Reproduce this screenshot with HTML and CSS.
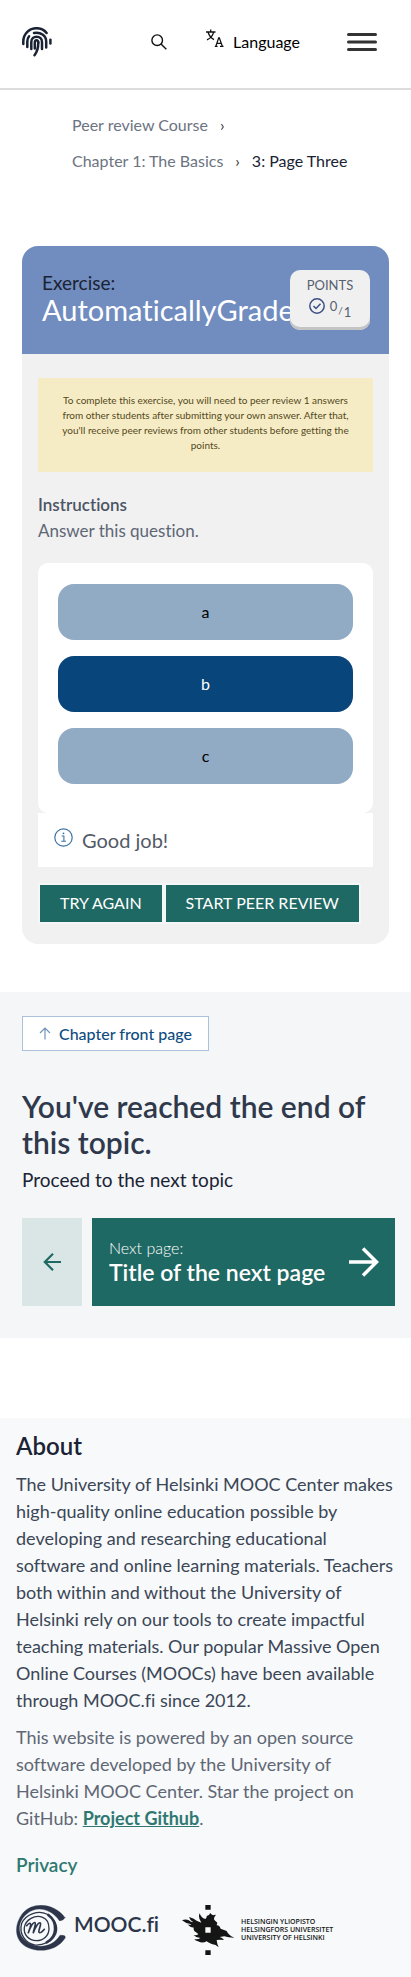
FILE: index.html
```html
<!DOCTYPE html>
<html lang="en">
<head>
<meta charset="utf-8">
<meta name="viewport" content="width=device-width, initial-scale=1">
<title>3: Page Three</title>
<link rel="stylesheet" href="styles.css">
</head>
<body>
<header class="topbar">
  <a class="brand" href="#" aria-label="Home">
    <svg width="30" height="30" viewBox="0 0 30 30" fill="none" stroke="#1a2333" stroke-width="2.5" stroke-linecap="round">
      <path d="M1.300 17V14.500C1.300 7 7 1.200 14.500 1.200C18.800 1.200 22.300 3 24.600 6"/>
      <path d="M28.400 12.800V16.500"/>
      <path d="M5.300 20V14.500C5.300 12.500 6 10.500 7.100 9.200"/>
      <path d="M12 6C18.500 4.600 24.200 8.500 24.200 14.500V20.500"/>
      <path d="M9.300 22V15C9.300 8 20 8 20 15V22"/>
      <path d="M16.300 15.500C16.300 12.500 12.800 12.800 12.800 15.500V21.500"/>
      <path d="M16.300 15.500C16.300 20 15.500 24.500 12.500 28.200"/>
    </svg>
  </a>
  <nav class="tools" aria-label="Tools">
    <button class="icon-button" aria-label="Search">
      <svg width="16" height="16" viewBox="0 0 16 16" fill="none" stroke="#111" stroke-width="1.400"><circle cx="6.200" cy="6.200" r="5.300"/><path d="M10 10L15.300 15.300"/></svg>
    </button>
    <button class="language">
      <svg width="18" height="19" viewBox="0 0 18 19" fill="none" stroke="#111" stroke-width="1.300"><path d="M0 3H9.500M4.700 0.500V3M7.600 3C7 6.500 4.500 9.200 1 10.800M2 3C3 6.500 5 9 8 10.600M8.800 17.400H11.600M14 17.400H17.500M9.800 17.400L12.700 8.800H13.300L16.400 17.400M10.800 14.400H15.200"/></svg>
      <span>Language</span>
    </button>
    <button class="icon-button" aria-label="Open menu">
      <svg width="30" height="18" viewBox="0 0 30 18" stroke="#333" stroke-width="3" stroke-linecap="round"><path d="M1.500 1.500H28.500M1.500 9H28.500M1.500 16.500H28.500"/></svg>
    </button>
  </nav>
</header>

<nav class="breadcrumbs" aria-label="Breadcrumbs">
  <span class="crumb"><a href="#">Peer review Course</a><span class="sep">›</span></span>
  <span class="crumb"><a href="#">Chapter 1: The Basics</a><span class="sep">›</span></span>
  <span class="current">3: Page Three</span>
</nav>

<main>
  <section class="exercise">
    <header class="exercise-head">
      <h2 class="exercise-title"><span class="exercise-label">Exercise:</span>AutomaticallyGraded</h2>
      <div class="points">
        <span>POINTS</span>
        <div class="score">
          <svg width="16" height="16" viewBox="0 0 16 16" fill="none" stroke="#3c4f80" stroke-width="1.500"><circle cx="8" cy="8" r="7.200"/><path d="M4.500 8L7 10.500L11.500 5.800"/></svg>
          <span class="fraction"><span>0</span><span class="slash">/</span><span class="total">1</span></span>
        </div>
      </div>
    </header>
    <div class="exercise-body">
      <p class="notice">To complete this exercise, you will need to peer review 1 answers from other students after submitting your own answer. After that, you'll receive peer reviews from other students before getting the points.</p>
      <h3 class="instructions">Instructions</h3>
      <p class="question">Answer this question.</p>
      <div class="options">
        <button class="option">a</button>
        <button class="option selected" aria-pressed="true">b</button>
        <button class="option">c</button>
      </div>
      <div class="feedback">
        <svg width="19" height="19" viewBox="0 0 19 19" fill="none" stroke="#3b73a4"><circle cx="9.500" cy="9.500" r="8.700" stroke-width="1.200"/><path d="M7.600 8H9.900V13.300M7.300 13.300H12" stroke-width="1.100"/><circle cx="9.500" cy="5.300" r="0.900" fill="#3b73a4" stroke="none"/></svg>
        <span>Good job!</span>
      </div>
      <div class="actions">
        <button class="action">TRY AGAIN</button>
        <button class="action">START PEER REVIEW</button>
      </div>
    </div>
  </section>

  <section class="next-topic">
    <a class="front-page" href="#">
      <svg width="12" height="13" viewBox="0 0 12 13" fill="none" stroke="#6f94b9" stroke-width="1.200"><path d="M6 12.500V1M1 6L6 1L11 6"/></svg>
      <span>Chapter front page</span>
    </a>
    <h2>You've reached the end of this topic.</h2>
    <p>Proceed to the next topic</p>
    <div class="pager">
      <a class="prev" href="#" aria-label="Previous page">
        <svg width="18" height="18" viewBox="0 0 18 18" fill="none" stroke="#1f6964" stroke-width="2.200"><path d="M18 9H2M10 0.800L1.800 9L10 17.200"/></svg>
      </a>
      <a class="next" href="#">
        <span class="next-text"><small>Next page:</small><strong>Title of the next page</strong></span>
        <svg width="30" height="30" viewBox="0 0 30 30" fill="none" stroke="#fff" stroke-width="3.500"><path d="M0 15H27M14 1.500L27.500 15L14 28.500"/></svg>
      </a>
    </div>
  </section>
</main>

<footer class="footer">
  <h2>About</h2>
  <p>The University of Helsinki MOOC Center makes high-quality online education possible by developing and researching educational software and online learning materials. Teachers both within and without the University of Helsinki rely on our tools to create impactful teaching materials. Our popular Massive Open Online Courses (MOOCs) have been available through MOOC.fi since 2012.</p>
  <p class="muted">This website is powered by an open source software developed by the University of Helsinki MOOC Center. Star the project on GitHub: <a class="github" href="#">Project Github</a>.</p>
  <a class="privacy" href="#">Privacy</a>
  <div class="logos">
    <a class="mooc" href="#">
      <svg width="50" height="46" viewBox="0 0 150 138" fill="none" stroke="#2c3549" stroke-linecap="round">
        <path d="M147 38C116 -6 50 -12 19 26C-8 62 -4 108 32 126C74 147 126 134 148 98Q148 90 138 91L132 91C112 124 70 133 38 115C2 92 2 52 33 26C62 2 104 10 130 47Q140 49 147 38Z" fill="#2c3549" stroke-width="1" stroke-linejoin="round"/>
        <path d="M92 27C68 15 30 26 17 55C8 86 28 115 56 120C82 122 108 109 119 87C128 65 116 40 92 27Z" stroke-width="4"/>
        <path d="M97 30C126 51 124 97 92 112" stroke-width="8"/>
        <path d="M80 37C56 28 29 44 25 67C22 90 39 106 61 107C83 107 99 91 99 71C99 54 91 41 80 37Z" stroke-width="4"/>
        <path d="M32 62C42 50 47 54 42 69L37 83C43 66 52 50 57 53C61 56 53 73 52 83C58 66 68 50 73 54C77 58 66 77 69 82C72 86 80 79 85 73" stroke-width="5" stroke-linejoin="round"/>
      </svg>
      <span>MOOC.fi</span>
    </a>
    <a class="helsinki" href="#">
      <svg width="52" height="50" viewBox="24 27 156 150" fill="#151515">
        <path d="M94 27H110V41H94ZM94 163H110V177H94Z"/>
        <path fill-rule="evenodd" d="M24 73Q39 67 51 77L58 79Q47 72 45 63Q59 66 68 74L82 80Q71 64 77 52Q81 66 94 69Q99 65 98 60Q106 59 109 51Q114 59 120 57L126 56Q118 65 121 72L130 80L128 88Q136 87 140 98L158 105Q162 117 181 125Q162 125 151 121L137 123Q145 125 150 132Q138 130 128 132Q129 144 134 154Q126 145 113 144Q102 140 98 136Q85 143 72 136Q64 134 61 129Q73 131 79 126Q66 125 58 117Q68 120 73 114L61 105Q57 98 60 95Q47 94 40 85Q48 88 52 85Q35 83 24 73ZM94 94V110H110V94Z"/>
      </svg>
      <span class="helsinki-name"><span>HELSINGIN YLIOPISTO</span><span>HELSINGFORS UNIVERSITET</span><span>UNIVERSITY OF HELSINKI</span></span>
    </a>
  </div>
</footer>
</body>
</html>
```
FILE: styles.css
```css
* { box-sizing: border-box; }
body, h2, h3, p { margin: 0; }
body { background: #fff; color: #1a2333; font-family: Lato, sans-serif; font-size: 16px; font-variant-ligatures: none; }
a { color: inherit; text-decoration: none; }
button { border: 0; padding: 0; background: none; font: inherit; color: #000; cursor: pointer; }
svg { display: block; flex: none; }

.topbar { display: flex; align-items: center; justify-content: space-between; height: 90px; padding: 0 34px 4px 22px; border-bottom: 2px solid #dcdcdc; }
.tools { display: flex; align-items: center; }
.language { display: flex; align-items: center; gap: 9px; margin: 0 47px 0 39px; line-height: 20px; }
.language svg { margin-bottom: 8px; }

.breadcrumbs { display: flex; flex-wrap: wrap; padding: 17px 60px 0 72px; line-height: 36px; color: #6c7381; }
.crumb { margin-right: 12px; }
.crumb:first-child { margin-right: 40px; }
.breadcrumbs .sep { margin-left: 12px; color: #333; }
.breadcrumbs .current { color: #1a2333; }

.exercise { margin: 67px 22px 0; border-radius: 16px; overflow: hidden; background: #f1f1f1; }
.exercise-head { position: relative; height: 108px; padding: 25px 20px; background: #718dbf; }
.exercise-title { font-size: 29px; line-height: 30px; font-weight: 400; color: #fff; white-space: nowrap; }
.exercise-label { display: block; font-size: 19px; line-height: 24px; color: #1a2333; }
.points { position: absolute; top: 24px; right: 19px; width: 80px; height: 60px; padding-top: 6px; border-radius: 10px; background: #f0f0f0; box-shadow: inset 0 -3px 0 #c4c4c4; color: #57606f; font-size: 13px; line-height: 18px; text-align: center; }
.score { display: flex; align-items: flex-start; justify-content: center; gap: 5px; padding-top: 4px; }
.fraction { display: flex; gap: 1px; font-size: 13px; line-height: 16px; }
.fraction .slash { padding-top: 4px; font-size: 10px; }
.fraction .total { padding-top: 6px; }
.exercise-body { padding: 24px 16px 20px; }
.notice { padding: 15px 20px 19px; background: #f5ecc6; color: #54481a; font-size: 10px; line-height: 15px; text-align: center; }
.instructions { margin-top: 20px; font-size: 17px; line-height: 26px; font-weight: 600; color: #4c5565; }
.question { font-size: 17px; line-height: 26px; color: #5d6675; }
.options { display: grid; gap: 16px; margin-top: 19px; padding: 21px 20px 29px; border-radius: 10px; background: #fff; }
.option { height: 56px; padding-bottom: 2px; border-radius: 16px; background: #91abc4; }
.option.selected { background: #08457a; color: #fff; }
.feedback { display: flex; align-items: flex-start; gap: 9px; padding: 13px 16px; background: #fff; color: #535a66; font-size: 20px; line-height: 28px; }
.feedback svg { margin-top: 2px; }
.actions { display: flex; margin-top: 16px; }
.action { height: 41px; padding: 0 20px 2px; border: 2px solid #f5f6f7; background: #1f6964; color: #fff; font-size: 16px; white-space: nowrap; }

.next-topic { margin-top: 48px; padding: 24px 16px 32px 22px; background: #f4f6f8; }
.front-page { display: inline-flex; align-items: center; gap: 8px; height: 35px; padding: 0 16px; border: 1px solid #aac1d9; background: #fff; color: #0f4c81; font-size: 16px; line-height: 20px; font-weight: 500; }
.next-topic h2 { margin-top: 37px; font-size: 30px; line-height: 36px; font-weight: 600; color: #2f394b; }
.next-topic p { margin-top: 7px; font-size: 19px; line-height: 26px; }
.pager { display: flex; gap: 10px; margin-top: 25px; }
.prev { display: flex; flex: none; align-items: center; justify-content: center; width: 60px; background: #dae6e5; }
.next { display: flex; flex: 1; align-items: center; justify-content: space-between; height: 88px; padding: 0 16px 0 17px; background: #1f6964; color: #fff; }
.next-text { display: grid; padding-bottom: 2px; white-space: nowrap; }
.next small { font-size: 16px; line-height: 22px; font-weight: 300; }
.next strong { font-size: 23px; line-height: 26px; font-weight: 600; }

.footer { margin-top: 80px; padding: 13px 16px 24px; background: #f7f9fa; font-size: 18px; line-height: 27px; color: #3b4656; }
.footer h2 { font-size: 24px; line-height: 29px; font-weight: 600; color: #1a2333; }
.footer p { margin-top: 11px; }
.footer p.muted { margin-top: 10px; color: #5f6775; }
.github { color: #2f7871; font-weight: 700; text-decoration: underline; }
.privacy { display: inline-block; margin-top: 19px; color: #2f7871; font-size: 19px; font-weight: 600; }
.logos { display: flex; gap: 23px; margin-top: 26px; }
.mooc { display: flex; align-items: flex-start; gap: 8px; color: #2c3549; font-size: 21px; line-height: 38px; font-weight: 600; }
.helsinki { display: flex; align-items: center; gap: 7px; color: #151515; }
.helsinki-name { display: grid; font: 600 7px/8px "Open Sans", sans-serif; white-space: nowrap; }
```
